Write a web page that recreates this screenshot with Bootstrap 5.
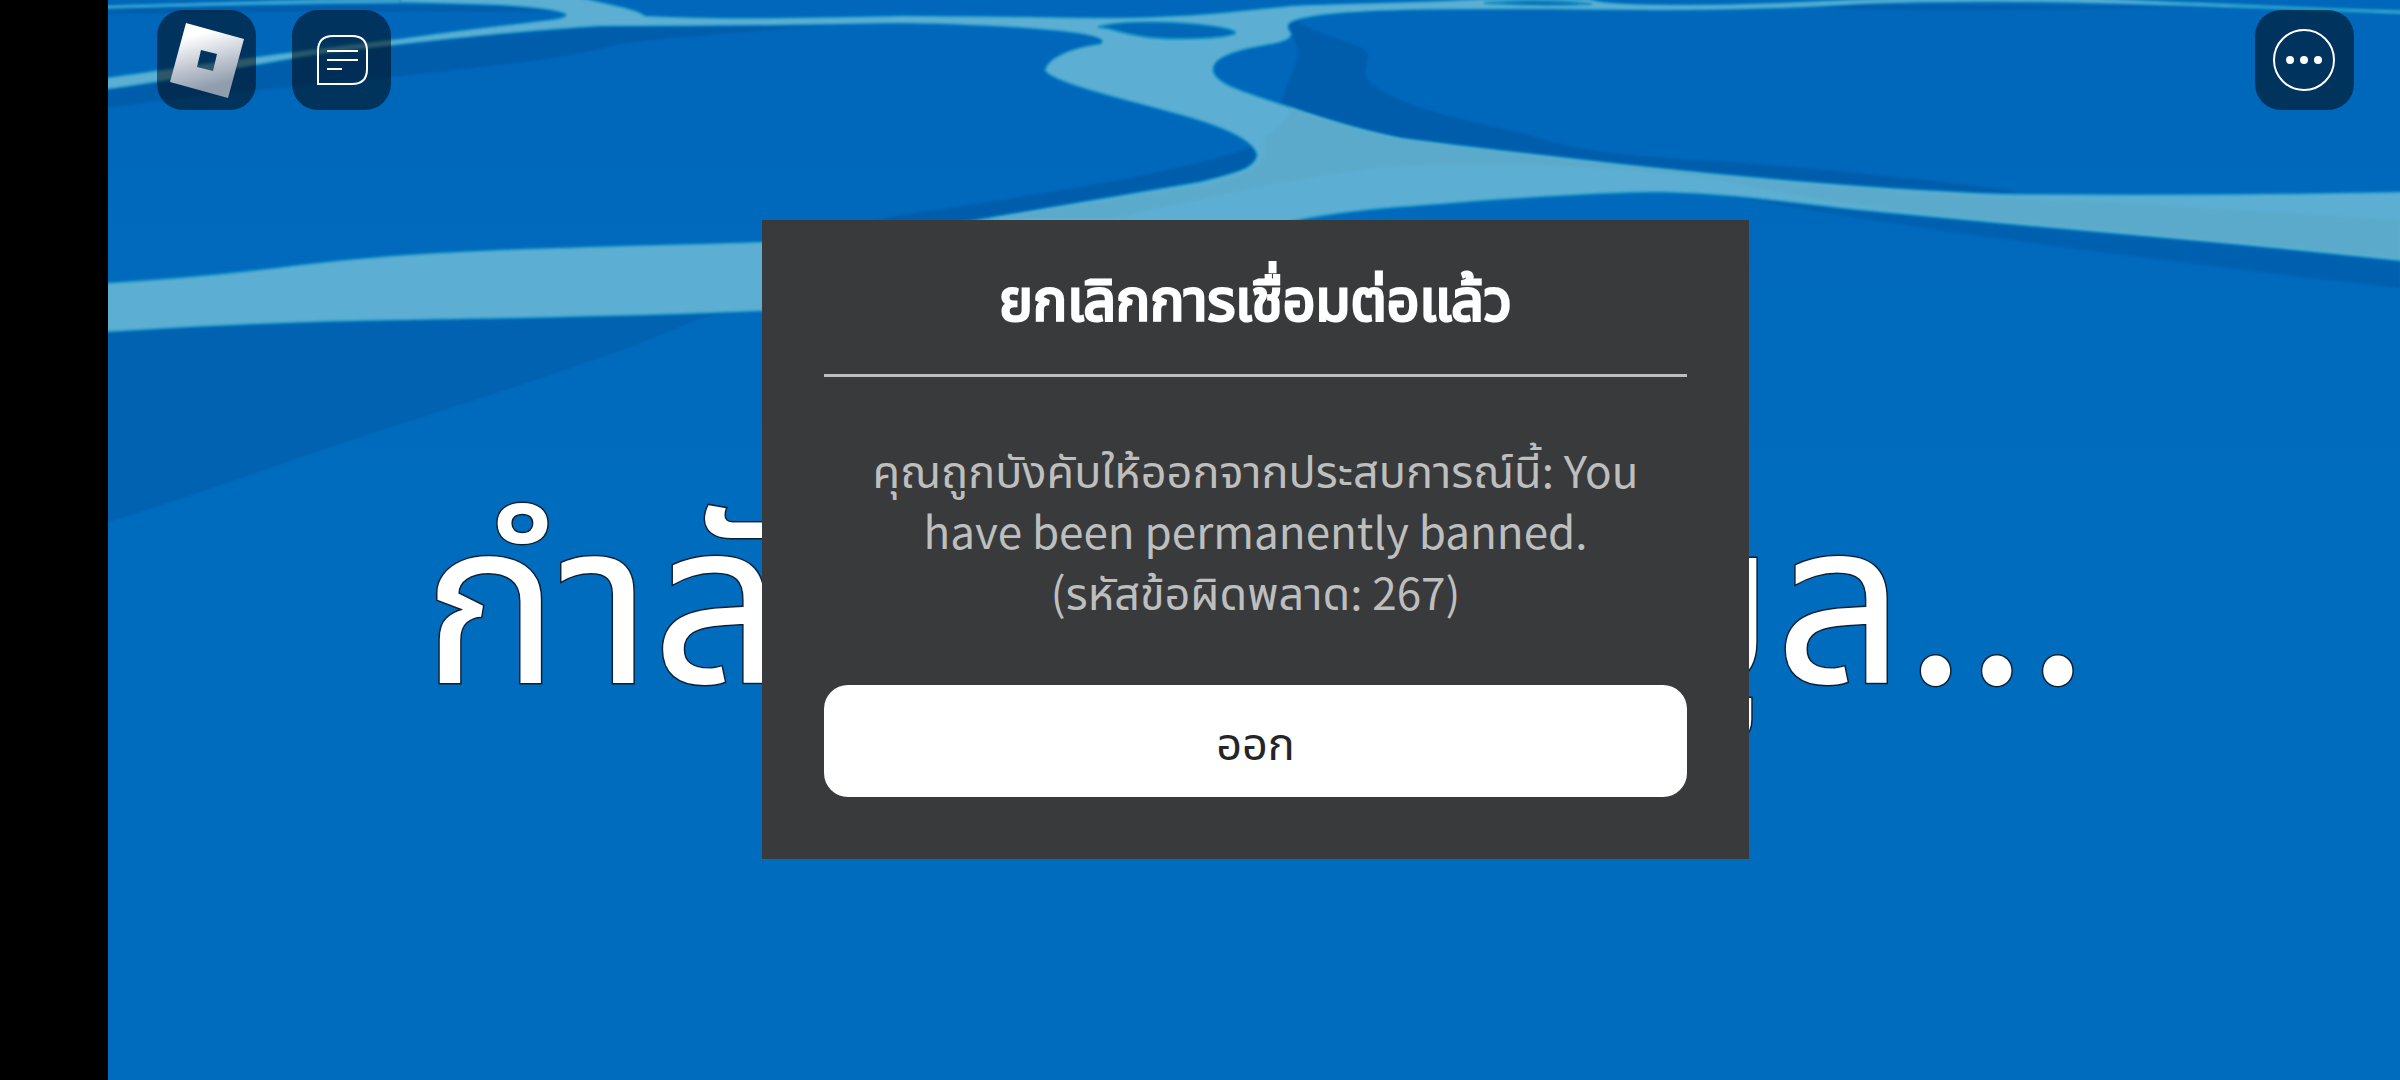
<!DOCTYPE html>
<html lang="th" class="h-100">
<head>
<meta charset="utf-8">
<meta name="viewport" content="width=device-width, initial-scale=1">
<title>ยกเลิกการเชื่อมต่อแล้ว</title>
<link href="https://cdn.jsdelivr.net/npm/bootstrap@5.3.0/dist/css/bootstrap.min.css" rel="stylesheet">
<style>
  body { font-family: "Noto Sans CJK SC", "Noto Sans Thai", "Noto Sans", sans-serif; background: #000; }
  .stage { margin-left: 108px; background: linear-gradient(#0067bb, #006cbd 45%); }
  .water { z-index: 0; }
  .hud { z-index: 3; padding: 10px 46px 0 49px; }
  .hud-left { gap: 36px; }
  .hud-btn { width: 99px; height: 100px; border: 0; border-radius: 26px; background: rgba(0, 0, 0, .5); }
  .loading { z-index: 1; padding: 90px 0 0 3px; font-size: 228px; line-height: 320px; color: #fff; -webkit-text-stroke: 3px #0c2036; paint-order: stroke fill; }
  .loading-dots { font-size: 220px; }
  .layer { z-index: 2; padding: 0 0 1px 3px; }
  .dialog-box { width: 987px; max-width: 100%; padding: 28px 62px 62px; background: #393a3c; }
  .dialog-title { padding-bottom: 32px; font-size: 57px; line-height: 94px; font-weight: 400; color: #fff; -webkit-text-stroke: 3px #fff; }
  .dialog-rule { border-top: 3px solid #bdbfbe; opacity: 1; }
  .dialog-text { padding: 61px 0 64px; font-size: 45px; line-height: 61px; color: #bdbebe; }
  .latin { font-size: 44px; line-height: 1; }
  .leave-btn { height: 112px; border-radius: 24px; font-size: 45px; color: #232527; background: #fff; }
  .leave-btn:hover { color: #232527; background: #eee; }
</style>
</head>
<body class="h-100 overflow-hidden">
<main class="stage position-relative h-100 overflow-hidden">
  <svg class="water position-absolute top-0 start-0 w-100 h-100" viewBox="108 0 2292 1080" preserveAspectRatio="none" aria-hidden="true">
    <defs>
      <filter id="soft" x="-5%" y="-5%" width="110%" height="110%"><feGaussianBlur stdDeviation="1.3"/></filter>
    </defs>
    <!-- deep shade beside the foam -->
    <g fill="#005dac" filter="url(#soft)">
      <path d="M90 90L260 60L400 42L560 26L860 24Q700 34 620 44C560 62 420 74 300 86Q200 96 90 110Z"/>
      <path fill="#0062b0" d="M90 325L762 308L700 318C640 345 600 358 520 385C440 412 360 436 270 468Q180 500 90 528Z"/>
      <path d="M1290 15C1300 30 1350 40 1365 50C1375 60 1358 68 1370 82C1400 110 1480 122 1530 135C1570 148 1590 152 1680 159C1760 163 1900 175 2020 192L1900 196L1600 166L1400 140L1280 106C1285 85 1300 60 1298 50L1288 22Z"/>
      <path fill="#0061b0" d="M1700 193L1900 213L2400 258V288C2250 272 2100 252 1980 236C1880 222 1800 208 1700 193Z"/>
      <path d="M1258 145C1180 172 1060 192 900 215L860 224H970L1200 184L1258 165Z"/>
      <path d="M108 10Q320 4 520 5L600 12Q300 10 108 14ZM1780 4L2200 6Q2000 12 1850 9Z"/>
    </g>
    <!-- foam -->
    <g fill="#5cafd3" stroke="#1290c6" stroke-width="2" filter="url(#soft)">
      <path stroke-width="1" fill="#3ba0cd" d="M90 6Q300 0 440 -4H560C600 2 625 10 640 21L580 21C570 8 500 3 400 3Q240 4 90 9Z"/>
      <path d="M90 80C200 65 300 50 400 39C470 29 510 25 550 20C585 15 560 9 500 5L400 2V-4H575C600 3 635 8 645 16C730 20 800 18 900 16C1000 16 1070 18 1120 18C1210 16 1250 10 1290 6C1350 3 1420 3 1480 -1H1590C1600 6 1700 6 1780 3Q1860 -1 1930 -3H2080Q2200 4 2410 11V14Q2200 5 2040 2Q1930 1 1860 4C1760 10 1700 11 1550 9C1440 9 1380 9 1330 14C1295 18 1284 22 1289 30C1297 40 1280 43 1250 48C1225 54 1213 60 1213 70C1215 85 1250 94 1290 107C1330 121 1360 130 1400 138C1460 146 1540 155 1620 164C1730 176 1880 189 2000 194Q2200 196 2410 192V262Q2300 250 2200 241C2100 232 1980 222 1880 212C1790 203 1740 194 1660 192C1560 193 1460 203 1400 207C1350 211 1320 215 1290 222V320H960C900 308 840 309 762 311C620 317 500 318 400 320Q250 322 90 333V284Q200 278 300 265C370 257 410 254 500 250C600 246 680 245 762 242L965 222C1060 206 1130 194 1200 182C1240 172 1255 168 1257 155C1254 140 1220 125 1170 112C1120 98 1050 82 1045 70C1048 58 1070 48 1100 44C1110 38 1085 33 1050 30C1000 25 950 24 900 23C800 25 720 26 600 26C500 32 400 44 320 54C230 68 160 84 90 91Z"/>
    </g>
    <path fill="#5caacb" filter="url(#soft)" d="M1290 108C1340 124 1370 134 1420 142C1540 158 1640 168 1720 177C1860 190 1990 198 2110 202Q2250 210 2400 220V258Q2200 239 1980 219C1880 210 1800 198 1710 178C1600 166 1480 160 1380 168C1280 180 1200 200 1110 219H990L1210 184C1265 172 1270 150 1262 138Q1290 120 1290 108Z"/>
    <!-- gaps in the foam -->
    <g fill="#0067b6" stroke="#168fc5" stroke-width="2" filter="url(#soft)">
      <path d="M1098 27C1115 21 1160 21 1195 24C1225 27 1240 31 1234 34C1215 40 1160 40 1140 36C1120 33 1115 29 1098 27Z"/>
      <path d="M1484 3Q1540 -2 1592 4Q1540 7 1484 3Z"/>
    </g>
  </svg>

  <header class="hud position-absolute top-0 start-0 end-0 d-flex justify-content-between">
    <div class="hud-left d-flex">
      <button type="button" class="hud-btn p-0" aria-label="เมนู">
        <svg width="100" height="100" viewBox="0 0 100 100" aria-hidden="true">
          <defs><linearGradient id="metal" x1=".35" y1="0" x2=".6" y2="1"><stop offset=".15" stop-color="#fff"/><stop offset=".55" stop-color="#bfc5d0"/><stop offset=".85" stop-color="#909dae"/></linearGradient></defs>
          <path fill="url(#metal)" fill-rule="evenodd" d="M29 13L87 29L71 88L13 72ZM44 40L40 57L56 61L60 44Z"/>
        </svg>
      </button>
      <button type="button" class="hud-btn p-0" aria-label="แชท">
        <svg width="100" height="100" viewBox="0 0 100 100" fill="none" stroke="#fff" stroke-width="2" aria-hidden="true">
          <path d="M26 74V41Q26 26 41 26H60Q75 26 75 41V59Q75 74 60 74Z"/>
          <path d="M35 41H66M35 50H66M35 59H50"/>
        </svg>
      </button>
    </div>
    <button type="button" class="hud-btn p-0" aria-label="เพิ่มเติม">
      <svg width="100" height="100" viewBox="0 0 100 100" aria-hidden="true">
        <circle cx="49" cy="50" r="30" fill="none" stroke="#fff" stroke-width="2"/>
        <g fill="#fff"><circle cx="35" cy="50" r="4"/><circle cx="49" cy="50" r="4"/><circle cx="63" cy="50" r="4"/></g>
      </svg>
    </button>
  </header>

  <div class="loading position-absolute top-0 start-0 w-100 h-100 d-flex align-items-center justify-content-center text-nowrap" role="status"><div>กำลังโหลดข้อมูล<span class="loading-dots">...</span></div></div>

  <div class="layer position-relative h-100 d-flex align-items-center justify-content-center">
    <section class="dialog-box text-center" role="alertdialog" aria-labelledby="dlgTitle" aria-describedby="dlgText">
      <h1 id="dlgTitle" class="dialog-title m-0">ยกเลิกการเชื่อมต่อแล้ว</h1>
      <hr class="dialog-rule m-0">
      <p id="dlgText" class="dialog-text m-0">คุณถูกบังคับให้ออกจากประสบการณ์นี้<span class="latin">: You<br>have been permanently banned.</span><br>(รหัสข้อผิดพลาด<span class="latin">: 267)</span></p>
      <button type="button" class="leave-btn btn w-100 p-0">ออก</button>
    </section>
  </div>
</main>
<script src="https://cdn.jsdelivr.net/npm/bootstrap@5.3.0/dist/js/bootstrap.bundle.min.js"></script>
</body>
</html>
